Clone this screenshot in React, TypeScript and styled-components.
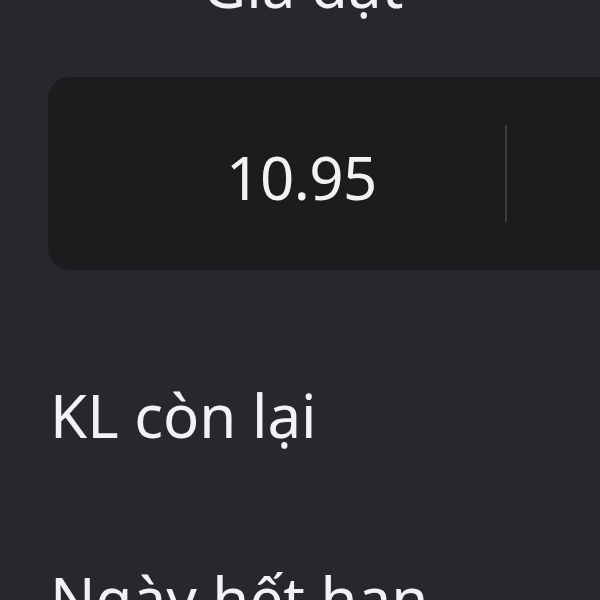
import styled, { createGlobalStyle } from "styled-components";

const GlobalStyle = createGlobalStyle`
  html, body {
    margin: 0;
    padding: 0;
    background: #28272d;
  }
  body {
    font-family: "Noto Sans", "Open Sans", sans-serif;
    color: #f2f2f4;
  }
`;

const StyledPage = styled.div`
  width: 600px;
  height: 600px;
  overflow: hidden;
  background: #28272d;
`;

const StyledForm = styled.div`
  display: flex;
  flex-direction: column;
  margin-top: -55px;
`;

const StyledTitle = styled.h2`
  margin: 0;
  font-size: 60px;
  font-weight: 400;
  line-height: 80px;
  text-align: center;
  padding-left: 6px;
`;

const StyledInputBox = styled.div`
  display: flex;
  align-items: center;
  margin: 52px 0 0 48px;
  width: 640px;
  height: 193px;
  flex-shrink: 0;
  border-radius: 22px;
  background: #1c1c1f;
`;

const StyledValue = styled.div`
  flex: 0 0 457px;
  box-sizing: border-box;
  padding-left: 50px;
  padding-top: 6px;
  font-size: 60px;
  line-height: 80px;
  text-align: center;
  letter-spacing: -0.5px;
`;

const StyledDivider = styled.span`
  display: block;
  width: 2px;
  height: 97px;
  background: #3a3a3f;
`;

const StyledLabel = styled.div<{ $gap: number }>`
  margin: ${({ $gap }) => $gap}px 0 0 50px;
  font-size: 60px;
  line-height: 80px;
`;

function App() {
  return (
    <>
      <GlobalStyle />
      <StyledPage>
        <StyledForm>
          <StyledTitle>Giá đặt</StyledTitle>
          <StyledInputBox>
            <StyledValue>10.95</StyledValue>
            <StyledDivider />
          </StyledInputBox>
          <StyledLabel $gap={105}>KL còn lại</StyledLabel>
          <StyledLabel $gap={103}>Ngày hết hạn</StyledLabel>
        </StyledForm>
      </StyledPage>
    </>
  );
}

export default App;
